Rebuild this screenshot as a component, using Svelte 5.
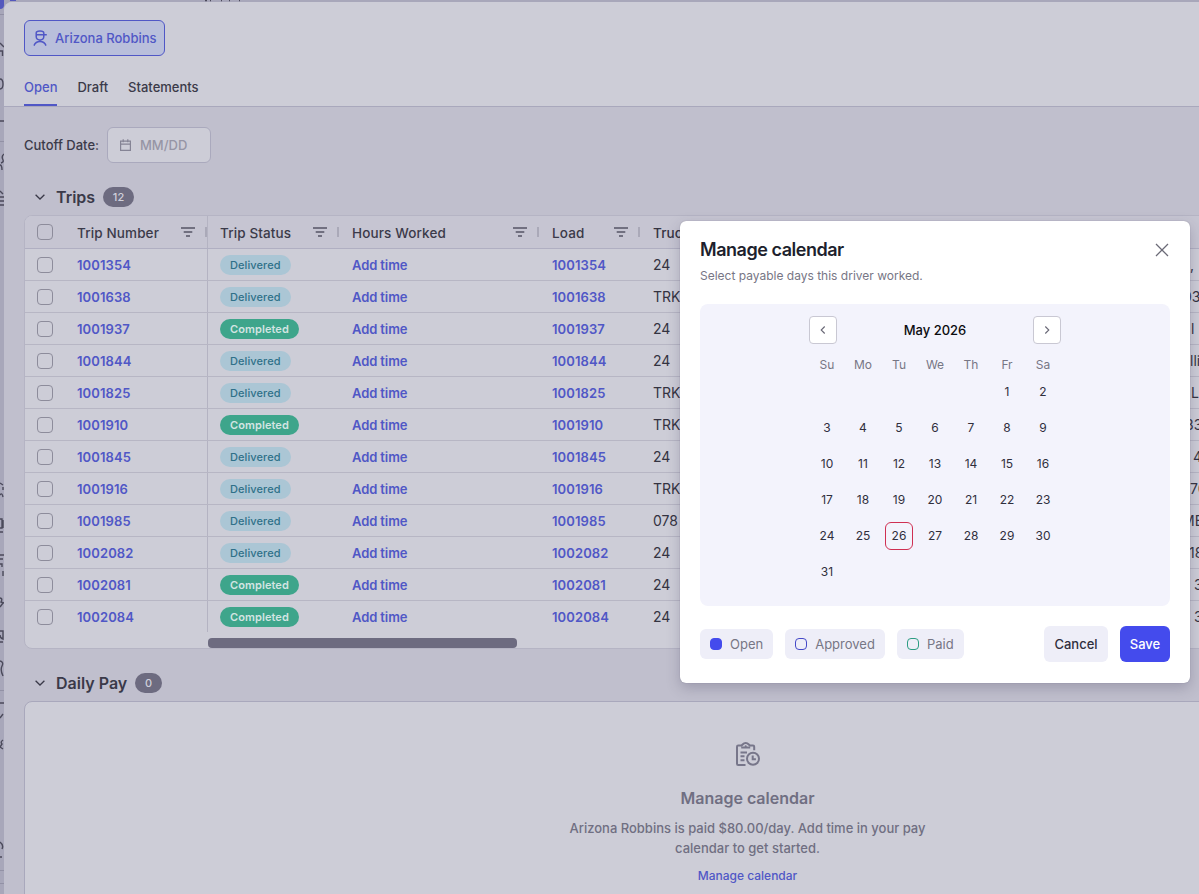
<script>
  const trips = [
    ['1001354', 'Delivered', '24', ',', -1],
    ['1001638', 'Delivered', 'TRK', '03', -8],
    ['1001937', 'Completed', '24', 'l', 0],
    ['1001844', 'Delivered', '24', 'lli', -1],
    ['1001825', 'Delivered', 'TRK', 'L.', 0],
    ['1001910', 'Completed', 'TRK', '33', -6],
    ['1001845', 'Delivered', '24', '4', 2],
    ['1001916', 'Delivered', 'TRK', '70', -1],
    ['1001985', 'Delivered', '078', 'ME', -9],
    ['1002082', 'Delivered', '24', '18', -2],
    ['1002081', 'Completed', '24', '3', 3],
    ['1002084', 'Completed', '24', '3', 3]
  ];
  const weekdays = ['Su', 'Mo', 'Tu', 'We', 'Th', 'Fr', 'Sa'];
  const days = [...Array(5).fill(''), ...Array.from({ length: 31 }, (_, i) => i + 1)];
</script>

{#snippet filter()}
  <svg class="filter" width="14" height="10" viewBox="0 0 14 10"><path d="M0 1h14M2.7 5h8.6M5 9h4" /></svg>
{/snippet}
{#snippet chevron()}
  <svg class="chev" width="10" height="6" viewBox="0 0 10 6"><path d="M.6.7 5 5 9.400.7" /></svg>
{/snippet}

<div class="page">
  <svg class="rail" width="240" height="894" viewBox="0 0 240 894">
    <path class="blue" d="M0 0h4v5a4 4 0 0 1-4 4z" />
    <path class="blue" d="M10 0h6v1h-6z" />
    <path class="tick" d="M0 14.500h4M0 141.500h4M0 690.500h4M0 870.500h4M0 883.500h4" />
    <path class="ink" d="M0 43l4 4M0 51h2.500v5M0 79q3 0 3 5t-3 5M0 121h4M4 154q-3 2-1 6 1 2-2 3M0 165q2 0 2 5M0 191l3 3M0 197h4M0 201h4M0 205h4M0 483l3 2M3 487v3M0 495q2-3 3 2M0 519h2v9h-2M3 520v8M0 532h3M0 555h4M0 559h3M0 564h2v3M3 571v5M0 598q3 0 1 4l3 1M0 607l3-4M0 631h3v8q-3-1-3-4M0 642h3M0 661q4 1 2 5t1 10M0 703h4M3 714l-3 4M3 740q-3 2-1 4l-2 3 3 2M0 842q4 3 2 7M0 857h2M205 .5h2M210 .5h1M221 .5h1M229 .5h1M239 .5h1" />
  </svg>

  <main class="sheet">
    <header>
      <div class="driver">
        <svg width="15" height="17" viewBox="0 0 15 17"><path d="M3.200 4.700h10.600M3.200 4V2.900C3.200 1.700 5 1 7 1s3.800.7 3.800 1.900v3.700A3.500 3.500 0 0 1 7.300 10h-.6a3.500 3.500 0 0 1-3.500-3.400V4zM1 15.600c1-2.500 3.300-4 6-4s5 1.500 6 4" /></svg>
        <span>Arizona Robbins</span>
      </div>
      <nav><span class="active">Open</span><span>Draft</span><span>Statements</span></nav>
    </header>

    <div class="content">
      <div class="cutoff">
        <span>Cutoff Date:</span>
        <div class="date">
          <svg width="11" height="12" viewBox="0 0 11 12"><path d="M.6 2.200h9.800v9.200H.6zM.6 5.200h9.800M3.200.300v3M7.800.300v3" /></svg>
          <span>MM/DD</span>
        </div>
      </div>

      <div class="section">{@render chevron()}<h2>Trips</h2><span class="count">12</span></div>

      <div class="table">
        <div class="row head">
          <div class="c-check"><i class="box"></i></div>
          <div class="c-num"><span>Trip Number</span>{@render filter()}<i class="sep"></i></div>
          <div class="c-status"><span>Trip Status</span>{@render filter()}<i class="sep"></i></div>
          <div class="c-hours"><span>Hours Worked</span>{@render filter()}<i class="sep"></i></div>
          <div class="c-load"><span>Load</span>{@render filter()}<i class="sep"></i></div>
          <div class="c-truck"><span>Truck</span></div>
        </div>
        {#each trips as [id, status, truck, dest, shift]}
          <div class="row">
            <div class="c-check"><i class="box"></i></div>
            <div class="c-num link">{id}</div>
            <div class="c-status"><span class="pill" class:done={status === 'Completed'}>{status}</span></div>
            <div class="c-hours link">Add time</div>
            <div class="c-load link">{id}</div>
            <div class="c-truck">{truck}</div>
            <div class="c-dest"><span style:margin-left="{shift}px">{dest}</span></div>
          </div>
        {/each}
        <div class="scroll"><i></i></div>
      </div>

      <div class="section daily">{@render chevron()}<h2>Daily Pay</h2><span class="count">0</span></div>

      <section class="empty">
        <svg width="26" height="26" viewBox="0 0 26 26">
          <path d="M10.500 24H3.200c-.8 0-1.200-.5-1.200-1.200V5.700c0-.8.4-1.200 1.200-1.200H6C7.700 4.500 7.700 2 10.700 2s3 2.500 4.700 2.500H18c.8 0 1.200.4 1.200 1.200v3.600M6.200 6.500h9M5.500 11.500h6.500M5.500 15.300h4M5.500 19.200h4" />
          <circle cx="18" cy="17.800" r="6" /><path d="M17.700 14.500v3.800h3.200" /><circle class="dot" cx="10.700" cy="5.300" r="1.100" />
        </svg>
        <h3>Manage calendar</h3>
        <p>Arizona Robbins is paid $80.00/day. Add time in your pay<br />calendar to get started.</p>
        <a href="#calendar">Manage calendar</a>
      </section>
    </div>
  </main>

  <div class="modal" role="dialog" aria-labelledby="title">
    <div class="title">
      <h1 id="title">Manage calendar</h1>
      <svg width="14" height="14" viewBox="0 0 14 14"><path d="M1 1l12 12M13 1 1 13" /></svg>
    </div>
    <p class="sub">Select payable days this driver worked.</p>
    <div class="calendar">
      <div class="month">
        <button aria-label="Previous"><svg width="6" height="8" viewBox="0 0 6 8"><path d="M4.700.5 1.200 4l3.500 3.500" /></svg></button>
        <strong>May 2026</strong>
        <button aria-label="Next"><svg width="6" height="8" viewBox="0 0 6 8"><path d="M1.300.5 4.800 4 1.300 7.500" /></svg></button>
      </div>
      <div class="week">{#each weekdays as d}<span>{d}</span>{/each}</div>
      <div class="days">{#each days as d}<span class:today={d === 26}>{d}</span>{/each}</div>
    </div>
    <footer>
      <span class="legend"><i class="open"></i>Open</span>
      <span class="legend"><i></i>Approved</span>
      <span class="legend"><i class="paid"></i>Paid</span>
      <button class="cancel">Cancel</button>
      <button class="save">Save</button>
    </footer>
  </div>
</div>

<style>
  :global(body) { overflow: hidden; }
  .page, .page :global(*) { box-sizing: border-box; }
  .page { position: relative; width: 1199px; height: 894px; overflow: hidden; background: #a8a7ba; font: 500 13px/20px Inter, sans-serif; color: #3b3a49; display: flex; padding: 2px 0 0 4px; }
  h1, h2, h3, p { margin: 0; }
  svg { fill: none; flex: none; display: block; }
  .rail { position: absolute; left: 0; top: 0; }
  .rail .blue { fill: #5458bd; }
  .rail .tick { stroke: #9291a5; }
  .rail .ink { stroke: #4b4a5b; stroke-width: 1.4; }
  .sheet { position: relative; flex: none; width: 1195px; height: 892px; background: #c0bfcd; border-radius: 8px 0 0 0; overflow: hidden; }
  header { height: 105px; background: #cdcdd7; border-bottom: 1px solid #a9a8bc; padding: 18px 20px 0; }
  .driver { display: flex; align-items: center; gap: 7px; width: 141px; height: 36px; border: 1px solid #5057c6; border-radius: 6px; background: #b9bfdb; color: #5057c6; padding-left: 8px; white-space: nowrap; }
  .driver svg { stroke: #5057c6; stroke-width: 1.5; }
  nav { display: flex; gap: 20px; margin-top: 14px; }
  nav span { height: 34px; line-height: 34px; }
  nav .active { color: #5057c6; border-bottom: 2px solid #5057c6; height: 36px; }
  .content { padding: 20px 0 0 20px; }
  .cutoff { display: flex; align-items: center; height: 36px; }
  .cutoff > span { width: 83px; white-space: nowrap; }
  .date { display: flex; align-items: center; gap: 9px; width: 104px; height: 36px; background: #cdcdd7; border: 1px solid #aaa9bd; border-radius: 6px; padding-left: 12px; color: #9695a5; }
  .date svg { stroke: #858495; stroke-width: 1.2; }
  .section { display: flex; align-items: center; height: 28px; margin-top: 20px; padding-left: 11px; }
  .chev { stroke: #3b3a49; stroke-width: 1.3; }
  h2 { font-size: 16px; line-height: 24px; font-weight: 600; margin: 0 8px 0 11px; }
  .count { height: 20px; border-radius: 10px; background: #6d6b80; color: #d0d0db; font-size: 11px; line-height: 20px; padding: 0 9.700px; font-weight: 500; }
  .table { width: 1300px; height: 434px; margin-top: 4px; border: 1px solid #b5b4c4; border-radius: 8px; background: #cdcdd7; overflow: hidden; }
  .row { display: flex; height: 32px; border-bottom: 1px solid #b7b6c4; white-space: nowrap; font-size: 14px; font-weight: 400; }
  .row > div { display: flex; align-items: center; flex: none; }
  .row:nth-last-child(2) { border-bottom-color: transparent; }
  .head { height: 33px; background: #c6c5d2; border-color: #b0afc2; font-size: 13.500px; font-weight: 500; }
  .head span { padding-top: 2px; letter-spacing: .13px; }
  .c-check { width: 40px; padding-left: 12px; }
  .box { width: 16px; height: 16px; border: 1px solid #8d8c9b; border-radius: 4px; }
  .c-num { width: 143px; padding-left: 12px; border-right: 1px solid #b4b3c2; }
  .c-status { width: 132px; padding-left: 12px; }
  .c-hours { width: 200px; padding-left: 12px; }
  .c-load { width: 101px; padding-left: 12px; }
  .c-truck { width: 550px; padding-left: 12px; color: #343341; }
  .c-dest span { color: #343341; }
  .row .link { color: #5057c6; font-size: 13px; font-weight: 600; letter-spacing: .1px; }
  .row .c-hours.link { letter-spacing: -.1px; }
  .filter { stroke: #555466; stroke-width: 1.600; margin-left: auto; }
  .sep { width: 2px; height: 10px; background: #aaa9b8; margin: 0 1px 0 10px; }
  .c-num .sep { margin-right: 0; }
  .pill { height: 20px; border-radius: 10px; line-height: 20px; padding: 0 10px; font-size: 11px; font-weight: 500; letter-spacing: .09px; background: #abc6d5; color: #2f7189; }
  .pill.done { background: #3ea58b; color: #d3e4e2; font-weight: 600; }
  .scroll { height: 15px; padding: 5px 0 0 183px; border: 0; display: flex; }
  .scroll i { width: 309px; height: 10px; border-radius: 4px; background: #6d6b80; }
  .daily { margin-top: 20px; }
  .empty { width: 1447px; height: 260px; margin-top: 4px; border: 1px solid #a9a8bc; border-radius: 8px; background: #cdcdd7; display: flex; flex-direction: column; align-items: center; color: #706f82; padding-top: 39px; text-align: center; }
  .empty svg { stroke: #77768a; stroke-width: 2; }
  .empty .dot { fill: #77768a; stroke: none; }
  h3 { font-size: 16px; line-height: 24px; font-weight: 600; margin: 19px 0 8px; }
  .empty a { color: #5057c6; font-size: 12px; text-decoration: none; margin-top: 8px; font-weight: 500; }
  .modal { position: absolute; left: 680px; top: 221px; width: 510px; height: 462px; background: #fff; border-radius: 6px; box-shadow: 0 0 1px #77768a, 0 5px 14px rgba(50, 48, 80, .25); padding: 17px 20px 20px; display: flex; flex-direction: column; font-weight: 400; }
  .title { display: flex; justify-content: space-between; align-items: center; height: 24px; padding-right: 1px; }
  .title svg { stroke: #6b6a77; stroke-width: 1.300; }
  h1 { font-size: 18px; line-height: 24px; font-weight: 600; letter-spacing: -.47px; color: #201f2d; }
  .sub { font-size: 12px; line-height: 16px; color: #777685; margin-top: 6px; }
  .calendar { height: 302px; margin-top: 20px; border-radius: 8px; background: #f3f3fc; padding: 12px 109px 0; }
  .month { display: flex; align-items: center; justify-content: space-between; height: 28px; color: #0c0c10; }
  .month strong { font-weight: 500; font-size: 13px; }
  button { font: inherit; border: 0; padding: 0; display: flex; align-items: center; justify-content: center; }
  .month button { width: 28px; height: 28px; background: #fff; border: 1px solid #c9c8d3; border-radius: 4px; }
  .month svg { stroke: #686775; stroke-width: 1.100; }
  .week, .days { display: grid; grid-template-columns: repeat(7, 36px); font-size: 12px; text-align: center; }
  .week { height: 18px; line-height: 18px; margin-top: 12px; color: #777685; }
  .days { grid-auto-rows: 36px; line-height: 28px; color: #302f3d; }
  .days span { margin: 4px; height: 28px; }
  .days .today { border: 1px solid #cf2f52; border-radius: 6px; line-height: 26px; }
  footer { display: flex; align-items: center; gap: 12px; margin-top: 20px; height: 36px; }
  .legend { display: flex; align-items: center; gap: 8px; height: 30px; padding: 0 10px; border-radius: 6px; background: #eeeef8; color: #777685; }
  .legend i { width: 12px; height: 12px; border: 1px solid #4549c8; border-radius: 4px; }
  .legend .open { background: #444bed; border-color: #444bed; }
  .legend .paid { border-color: #2d9d83; }
  footer button { height: 36px; border-radius: 6px; font-weight: 500; }
  .cancel { width: 64px; margin-left: auto; background: #eeeef8; color: #302f3d; }
  .save { width: 50px; background: #444bed; color: #fff; }
</style>
